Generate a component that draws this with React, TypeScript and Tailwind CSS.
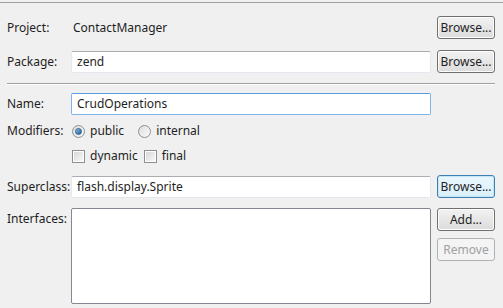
import React from 'react'

const font = { fontFamily: '"Segoe UI", "Noto Sans", "Open Sans", sans-serif' }

function Btn({ label, disabled, focused }: { label: string; disabled?: boolean; focused?: boolean }) {
  return (
    <button
      className={
        disabled
          ? 'w-[58px] h-[23px] rounded-[3px] border border-[#adb2b5] bg-[#f4f4f4] text-[12px] text-[#a0a0a0] leading-none'
          : focused
            ? 'w-[58px] h-[23px] rounded-[3px] border border-[#3c7fb1] bg-gradient-to-b from-[#eaf6fd] to-[#d9f0fc] text-[12px] text-[#1e1e1e] leading-none shadow-[inset_0_0_0_1px_#c4e5f6]'
            : 'w-[58px] h-[23px] rounded-[3px] border border-[#707070] bg-gradient-to-b from-[#f2f2f2] to-[#dcdcdc] text-[12px] text-[#1e1e1e] leading-none shadow-[inset_0_0_0_1px_#fcfcfc]'
      }
    >
      {label}
    </button>
  )
}

function Field({ value, focused, tall }: { value?: string; focused?: boolean; tall?: boolean }) {
  return (
    <div
      className={
        (tall ? 'h-[96px] border-[#828790] ' : 'h-[22px] ') +
        (focused
          ? 'border border-[#7eb4ea] border-t-[#569de5] '
          : tall
            ? 'border '
            : 'border border-[#e3e9ef] border-t-[#abadb3] ') +
        'flex-1 bg-white rounded-[2px] px-[5px] flex items-center text-[12px] text-[#1e1e1e]'
      }
    >
      {value}
    </div>
  )
}

function Radio({ checked }: { checked?: boolean }) {
  return (
    <span className="w-[13px] h-[13px] rounded-full border border-[#8e8f8f] bg-gradient-to-br from-[#dcdcdc] to-[#fbfbfb] flex items-center justify-center">
      {checked && (
        <span className="w-[7px] h-[7px] rounded-full bg-gradient-to-br from-[#8ec2e6] to-[#1c5b92] border border-[#2a628f]" />
      )}
    </span>
  )
}

function Check() {
  return (
    <span className="w-[13px] h-[13px] border border-[#8e8f8f] bg-white flex items-center justify-center">
      <span className="w-[9px] h-[9px] bg-gradient-to-br from-[#d8d8d8] to-[#f8f8f8]" />
    </span>
  )
}

export default function App() {
  return (
    <div className="w-[503px] h-[308px] bg-[#f0f0f0] text-[12px] text-[#1e1e1e] overflow-hidden" style={font}>
      <div className="h-[2px] bg-[#f0f0f0]" />
      <div className="h-px bg-[#a0a0a0]" />
      <div className="pl-[7px] pr-[8px]">
        <div className="flex items-center h-[23px] mt-[13px]">
          <div className="w-[66px]">Project:</div>
          <div className="flex-1">ContactManager</div>
          <div className="ml-[6px]"><Btn label="Browse..." /></div>
        </div>
        <div className="flex items-center h-[23px] mt-[11px]">
          <div className="w-[64px]">Package:</div>
          <Field value="zend" />
          <div className="ml-[6px]"><Btn label="Browse..." /></div>
        </div>
        <div className="h-px bg-[#a0a0a0] mt-[10px] border-b border-white box-content" />
        <div className="flex items-center h-[22px] mt-[8px]">
          <div className="w-[64px]">Name:</div>
          <Field value="CrudOperations" focused />
          <div className="w-[64px]" />
        </div>
        <div className="flex items-center h-[16px] mt-[8px]">
          <div className="w-[65px]">Modifiers:</div>
          <Radio checked />
          <span className="ml-[5px]">public</span>
          <span className="ml-[14px]"><Radio /></span>
          <span className="ml-[5px]">internal</span>
        </div>
        <div className="flex items-center h-[16px] mt-[9px]">
          <div className="w-[65px]" />
          <Check />
          <span className="ml-[5px]">dynamic</span>
          <span className="ml-[6px]"><Check /></span>
          <span className="ml-[5px]">final</span>
        </div>
        <div className="flex items-center h-[23px] mt-[11px]">
          <div className="w-[64px]">Superclass:</div>
          <Field value="flash.display.Sprite" />
          <div className="ml-[6px]"><Btn label="Browse..." focused /></div>
        </div>
        <div className="flex items-start mt-[10px]">
          <div className="w-[64px] pt-[2px]">Interfaces:</div>
          <Field tall />
          <div className="ml-[6px] flex flex-col gap-[7px]">
            <Btn label="Add..." />
            <Btn label="Remove" disabled />
          </div>
        </div>
      </div>
    </div>
  )
}
